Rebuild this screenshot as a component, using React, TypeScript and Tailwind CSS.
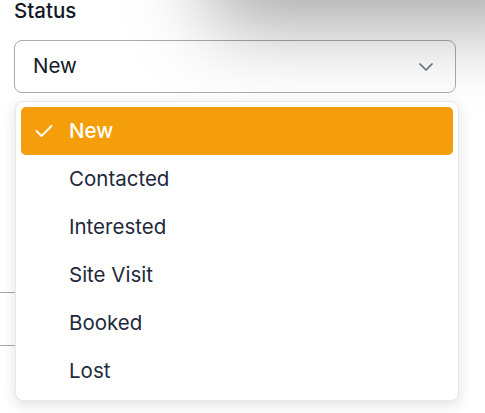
import { useState } from "react";

const statuses = ["New", "Contacted", "Interested", "Site Visit", "Booked", "Lost"];

const ChevronIcon = () => (
  <svg width="14" height="8" viewBox="0 0 14 8" fill="none" className="text-[#6b7280]">
    <polyline points="1,1 7,7 13,1" stroke="currentColor" strokeWidth="1.7" strokeLinecap="round" strokeLinejoin="round" />
  </svg>
);

const CheckIcon = () => (
  <svg width="18" height="12" viewBox="0 0 18 12" fill="none">
    <polyline points="1.5,6 6.5,11 16.5,1" stroke="white" strokeWidth="1.8" strokeLinecap="round" strokeLinejoin="round" />
  </svg>
);

export default function App() {
  const [value] = useState("New");

  return (
    <div className="relative w-[485px] h-[413px] overflow-hidden bg-white font-['Inter',sans-serif] text-[#1e293b]">
      <div className="px-[14px]">
        <label className="block text-[20.5px] leading-[22px] font-medium text-[#111827]">Status</label>
        <button className="mt-[18px] flex h-[53px] w-[442px] items-center justify-between rounded-[8px] border border-[#a9abb5] bg-white pl-[18px] pr-[22px] text-[20.5px] text-[#111827]">
          <span>{value}</span>
          <ChevronIcon />
        </button>
        <div className="-ml-[14px] mt-[199px] h-[54px] w-[30px] border-y border-[#a3a7b0]" />
      </div>

      {/* shadow of the panel above */}
      <div className="pointer-events-none absolute left-[210px] top-[-100px] h-[125px] w-[360px] bg-black/35 blur-[40px]" />

      {/* open select menu */}
      <div className="absolute left-[15px] top-[101px] w-[444px] rounded-[8px] border border-[#e5e7eb] bg-white p-[5px] shadow-[0_4px_14px_rgba(0,0,0,0.12)]">
        {statuses.map((s) => {
          const selected = s === value;
          return (
            <div
              key={s}
              className={
                selected
                  ? "relative flex h-[48px] items-center rounded-[5px] bg-[#f59e0b] pl-[48px] text-[20.5px] font-medium text-white"
                  : "relative flex h-[48px] items-center rounded-[5px] pl-[48px] text-[20.5px] text-[#1e293b]"
              }
            >
              {selected && (
                <span className="absolute left-[14px] top-[18px]">
                  <CheckIcon />
                </span>
              )}
              {s}
            </div>
          );
        })}
      </div>
    </div>
  );
}
